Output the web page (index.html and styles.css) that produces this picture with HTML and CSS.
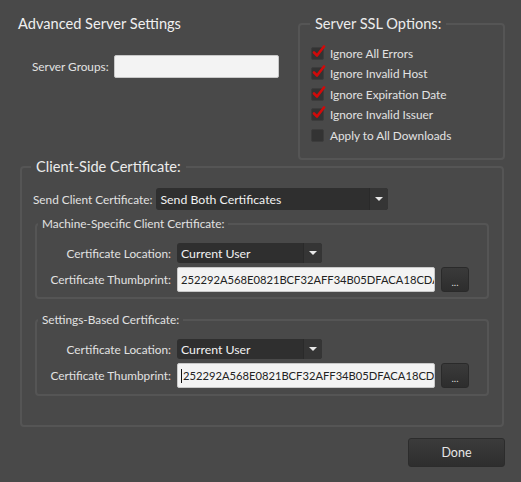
FILE: index.html
```html
<html lang="en">
<head>
  <meta charset="UTF-8">
  <title>Advanced Server Settings</title>
  <link rel="stylesheet" href="styles.css">
</head>
<body>
  <div class="top">
    <div class="left-col">
      <div class="title">Advanced Server Settings</div>
      <div class="groups-row">
        <span class="label">Server Groups:</span>
        <div class="text-box groups-box"></div>
      </div>
    </div>
    <fieldset class="box ssl-box">
      <legend class="big-legend">Server SSL Options:</legend>
      <div class="checks">
        <div class="check-row"><span class="check on"><svg width="15" height="15" viewBox="0 0 15 15"><path d="M3 7.5 L6 10.5 L13 1.5" fill="none" stroke="#d10a0a" stroke-width="2.6" stroke-linecap="round" stroke-linejoin="round"/></svg></span>Ignore All Errors</div>
        <div class="check-row"><span class="check on"><svg width="15" height="15" viewBox="0 0 15 15"><path d="M3 7.5 L6 10.5 L13 1.5" fill="none" stroke="#d10a0a" stroke-width="2.6" stroke-linecap="round" stroke-linejoin="round"/></svg></span>Ignore Invalid Host</div>
        <div class="check-row"><span class="check on"><svg width="15" height="15" viewBox="0 0 15 15"><path d="M3 7.5 L6 10.5 L13 1.5" fill="none" stroke="#d10a0a" stroke-width="2.6" stroke-linecap="round" stroke-linejoin="round"/></svg></span>Ignore Expiration Date</div>
        <div class="check-row"><span class="check on"><svg width="15" height="15" viewBox="0 0 15 15"><path d="M3 7.5 L6 10.5 L13 1.5" fill="none" stroke="#d10a0a" stroke-width="2.6" stroke-linecap="round" stroke-linejoin="round"/></svg></span>Ignore Invalid Issuer</div>
        <div class="check-row"><span class="check"></span>Apply to All Downloads</div>
      </div>
    </fieldset>
  </div>

  <fieldset class="box client-box">
    <legend class="big-legend">Client-Side Certificate:</legend>
    <div class="send-row">
      <span class="label">Send Client Certificate:</span>
      <div class="dropdown send-drop"><span class="drop-text">Send Both Certificates</span><span class="drop-arrow"></span></div>
    </div>

    <fieldset class="box cert-box">
      <legend class="small-legend">Machine-Specific Client Certificate:</legend>
      <div class="cert-grid">
        <span class="label right">Certificate Location:</span>
        <div class="dropdown loc-drop"><span class="drop-text">Current User</span><span class="drop-arrow"></span></div>
        <span class="label right">Certificate Thumbprint:</span>
        <div class="thumb-row">
          <div class="text-box thumb-box"><span class="thumb-text">252292A568E0821BCF32AFF34B05DFACA18CDA3</span></div>
          <button class="dots">...</button>
        </div>
      </div>
    </fieldset>

    <fieldset class="box cert-box second">
      <legend class="small-legend">Settings-Based Certificate:</legend>
      <div class="cert-grid">
        <span class="label right">Certificate Location:</span>
        <div class="dropdown loc-drop"><span class="drop-text">Current User</span><span class="drop-arrow"></span></div>
        <span class="label right">Certificate Thumbprint:</span>
        <div class="thumb-row">
          <div class="text-box thumb-box"><span class="caret"></span><span class="thumb-text">252292A568E0821BCF32AFF34B05DFACA18CDA3</span></div>
          <button class="dots">...</button>
        </div>
      </div>
    </fieldset>
  </fieldset>

  <div class="footer">
    <button class="done">Done</button>
  </div>
</body>
</html>
```

FILE: styles.css
```css
body {
  background: #494949;
  color: #e2e2e2;
  font-family: Lato, 'Noto Sans', sans-serif;
  font-size: 11.8px;
  margin: 0;
  width: 521px;
  height: 482px;
  overflow: hidden;
}

.box {
  border: 2px solid #555555;
  border-radius: 4px;
  margin: 0;
  padding: 0;
  box-sizing: border-box;
  min-width: 0;
}

.big-legend {
  font-size: 14.6px;
  line-height: 20px;
  padding: 0 5px;
  color: #ececec;
}

.small-legend {
  font-size: 11.8px;
  line-height: 16px;
  padding: 0 4px;
  margin-left: 1px;
}

.label {
  white-space: nowrap;
}

.right {
  text-align: right;
}

.top {
  display: flex;
  justify-content: space-between;
  padding: 14px 16px 0 18px;
}

.title {
  font-size: 14.6px;
  line-height: 20px;
  color: #f0f0f0;
}

.groups-row {
  display: flex;
  align-items: center;
  gap: 5px;
  margin: 21px 0 0 14px;
}

.text-box {
  background: #f3f3f3;
  border: 1px solid #c8c8c8;
  border-radius: 2px;
  box-sizing: border-box;
  color: #222;
}

.groups-box {
  width: 165px;
  height: 23px;
}

.ssl-box {
  width: 207px;
  height: 146px;
}

.ssl-box .big-legend {
  margin-left: 10px;
}

.checks {
  padding: 9px 0 0 11px;
}

.check-row {
  display: flex;
  align-items: center;
  gap: 6px;
  height: 20.5px;
}

.check {
  position: relative;
  width: 13px;
  height: 13px;
  border-radius: 2px;
  background: #333333;
  border: 1px solid #3c3c3c;
  box-sizing: border-box;
}

.check svg {
  position: absolute;
  left: -1px;
  top: -3px;
}

.client-box {
  width: 484px;
  height: 270px;
  margin: -3px 0 0 20px;
}

.client-box > .big-legend {
  margin-left: 9px;
}

.send-row {
  display: flex;
  align-items: center;
  gap: 4px;
  margin: 11px 0 0 11px;
}

.dropdown {
  display: flex;
  align-items: center;
  background: #2f2f2f;
  border-radius: 3px;
  height: 22px;
  color: #f2f2f2;
  overflow: hidden;
}

.drop-text {
  flex: 1;
  padding-left: 4px;
  font-size: 12.3px;
}

.drop-arrow {
  width: 18px;
  height: 100%;
  background: #353535;
  border-left: 1px solid #2a2a2a;
  position: relative;
}

.drop-arrow::after {
  content: "";
  position: absolute;
  left: 5px;
  top: 9px;
  border-left: 4px solid transparent;
  border-right: 4px solid transparent;
  border-top: 4px solid #e8e8e8;
}

.send-drop {
  width: 232px;
}

.cert-box {
  width: 454px;
  height: 83px;
  margin: 6px 0 0 13px;
}

.cert-box.second {
  height: 84px;
  margin-top: 13px;
}

.cert-grid {
  display: grid;
  grid-template-columns: 134px auto;
  column-gap: 6px;
  row-gap: 4px;
  align-items: center;
  margin-top: 11px;
}

.loc-drop {
  width: 145px;
  height: 20px;
}

.loc-drop .drop-arrow::after {
  top: 8px;
}

.thumb-row {
  display: flex;
  gap: 6px;
}

.thumb-box {
  display: flex;
  align-items: center;
  width: 258px;
  height: 25px;
  padding-left: 3px;
  overflow: hidden;
  font-size: 11.2px;
}

.thumb-text {
  white-space: nowrap;
}

.caret {
  width: 1px;
  height: 14px;
  background: #111;
  margin-right: 1px;
  flex: none;
}

.dots {
  width: 28px;
  height: 25px;
  background: linear-gradient(#3a3a3a, #2d2d2d);
  border: 1px solid #2a2a2a;
  border-radius: 3px;
  color: #ddd;
  font-size: 10px;
  padding: 4px 0 0;
  font-family: Lato, sans-serif;
}

.footer {
  display: flex;
  justify-content: flex-end;
  padding: 11px 16px 0 0;
}

.done {
  width: 97px;
  height: 29px;
  background: linear-gradient(#3b3b3b, #2e2e2e);
  border: 1px solid #2c2c2c;
  border-radius: 3px;
  color: #e6e6e6;
  font-family: Lato, sans-serif;
  font-size: 12.5px;
}
```
